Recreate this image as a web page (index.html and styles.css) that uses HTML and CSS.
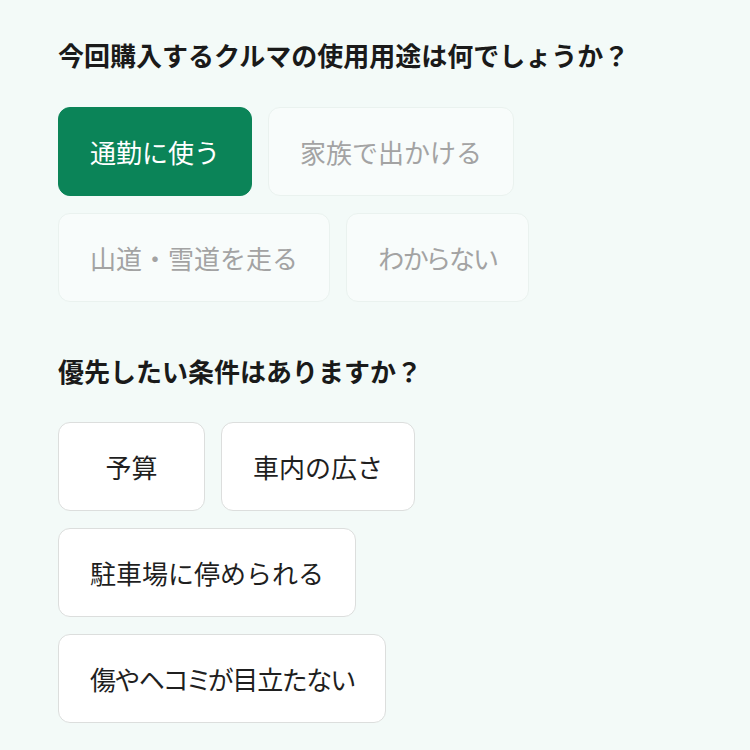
FILE: index.html
```html
<!DOCTYPE html>
<html lang="ja">
<head>
<meta charset="utf-8">
<link rel="stylesheet" href="styles.css">
</head>
<body>
<main class="page">
  <section class="question">
    <h2 class="question-title">今回購入するクルマの使用用途は何でしょうか？</h2>
    <div class="options">
      <button class="option option-selected">通勤に使う</button>
      <button class="option option-disabled">家族で出かける</button>
      <button class="option option-disabled">山道・雪道を走る</button>
      <button class="option option-disabled option-compact">わからない</button>
    </div>
  </section>
  <section class="question">
    <h2 class="question-title">優先したい条件はありますか？</h2>
    <div class="options">
      <button class="option option-min">予算</button>
      <button class="option">車内の広さ</button>
      <button class="option">駐車場に停められる</button>
      <button class="option option-compact">傷やヘコミが目立たない</button>
    </div>
  </section>
</main>
</body>
</html>
```

FILE: styles.css
```css
html, body {
  margin: 0;
  padding: 0;
  background: #f3faf8;
}

body {
  font-family: "Noto Sans CJK JP", "Noto Sans", sans-serif;
  color: #1a1a1a;
}

.page {
  padding: 37px 58px 0 58px;
  display: flex;
  flex-direction: column;
  gap: 51px;
}

.question {
  display: flex;
  flex-direction: column;
  gap: 33px;
}

.question:first-child {
  gap: 34px;
}

.question-title {
  margin: 0;
  font-size: 26px;
  line-height: 36px;
  font-weight: 700;
  color: #1a1a1a;
}

.options {
  display: flex;
  flex-wrap: wrap;
  gap: 17px 16px;
  max-width: 480px;
}

.option {
  font-family: inherit;
  font-size: 26px;
  line-height: 37px;
  padding: 25px 31px;
  border: 1px solid #dcdedd;
  border-radius: 12px;
  background: #ffffff;
  color: #1f1f1f;
  font-weight: 400;
  text-align: center;
}

.option-min {
  min-width: 147px;
}

.option-compact {
  font-feature-settings: "palt" 1;
  letter-spacing: -1px;
}

.option-selected {
  background: #0b8458;
  border-color: #0b8458;
  color: #ffffff;
}

.option-disabled {
  background: #f8fcfb;
  border-color: #eaf2ef;
  color: #a3a3a3;
}
```
